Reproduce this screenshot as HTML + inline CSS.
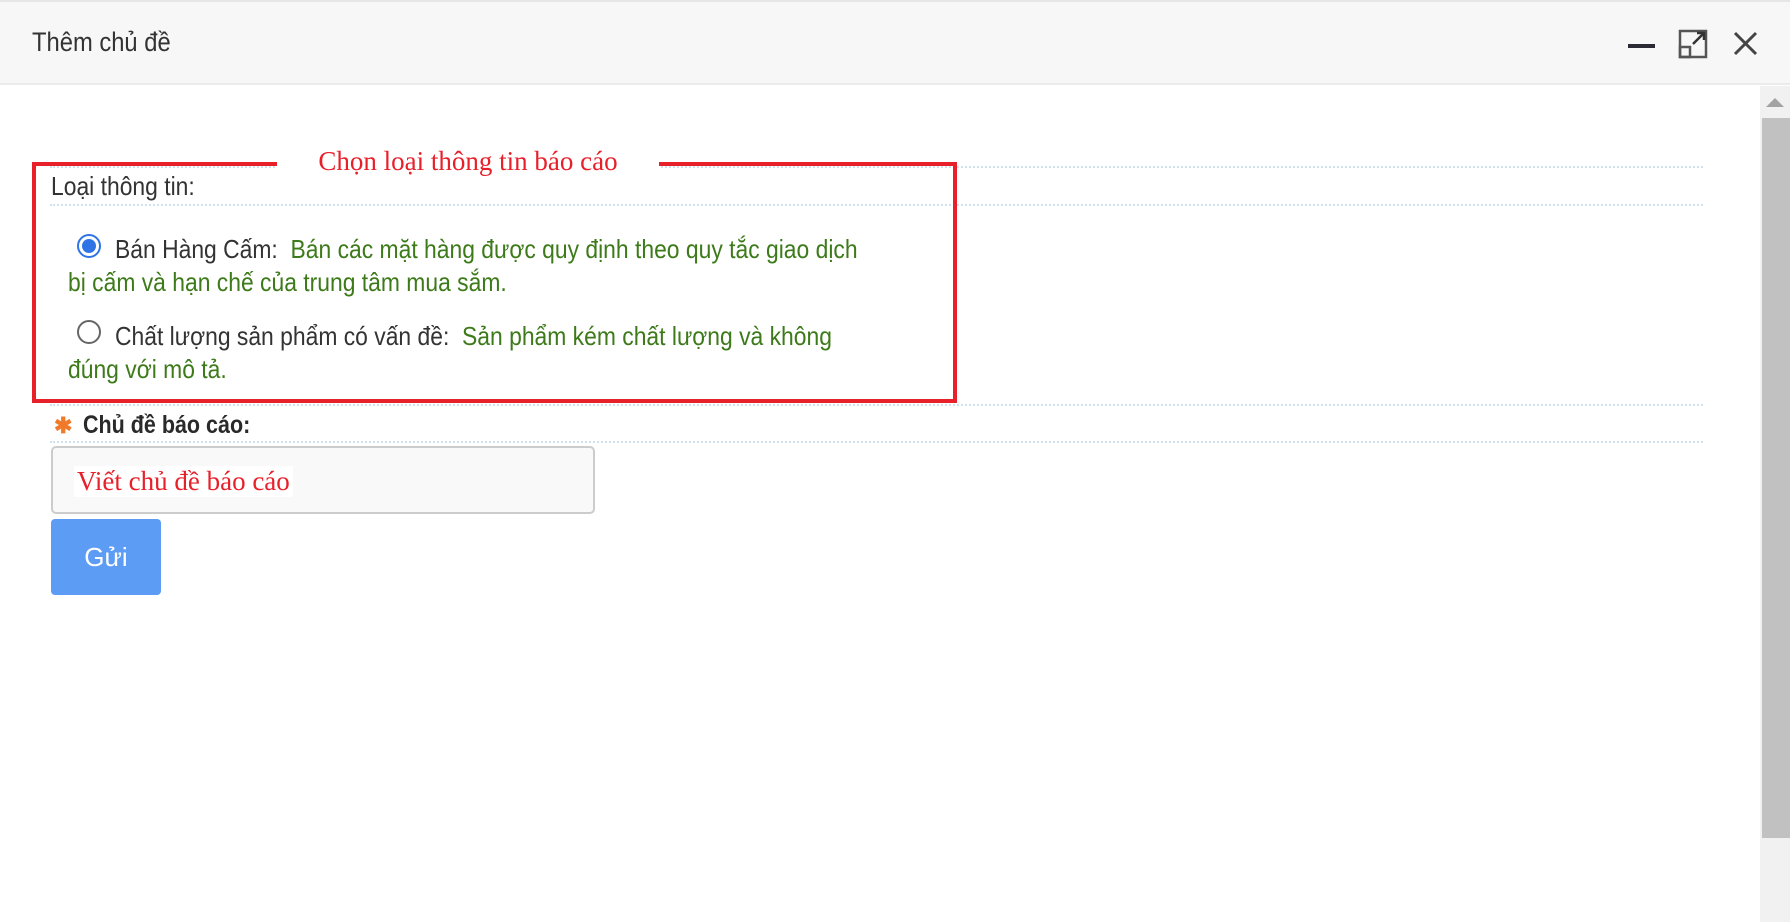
<!DOCTYPE html>
<html><head><meta charset="utf-8"><style>
*{margin:0;padding:0;box-sizing:border-box}
body{width:1790px;height:922px;background:#fff;position:relative;overflow:hidden;font-family:"Liberation Sans","Noto Sans CJK SC",sans-serif;color:#333}
.hdr{position:absolute;left:0;top:0;width:1790px;height:85px;background:#f7f7f7;border-top:2px solid #e6e6e6;border-bottom:2px solid #ebebeb}
.title{position:absolute;left:32px;top:25px;font-size:27px;color:#333;transform:scaleX(0.88);transform-origin:left;white-space:nowrap}
.a{position:absolute;white-space:nowrap}
.dot{position:absolute;left:50px;width:1653px;border-top:2px dotted #cfe3ef}
.red{position:absolute;left:32px;top:162px;width:925px;height:241px;border:4px solid #e8202a}
.gap{position:absolute;left:277px;top:156px;width:382px;height:14px;background:#fff}
.leg{position:absolute;left:277px;top:146px;width:382px;text-align:center;font-family:"Liberation Serif",serif;font-size:27px;color:#e8202a;white-space:nowrap}
.t{font-size:26px;transform:scaleX(0.88);transform-origin:left}
.g{color:#3d7a1a}
.radio{position:absolute;width:24px;height:24px;border-radius:50%;border:2px solid #666;background:#fff}
.radio.on{border-color:#2f74e6}
.radio.on::after{content:"";position:absolute;left:3px;top:3px;width:14px;height:14px;border-radius:50%;background:#2f74e6}
.inp{position:absolute;left:51px;top:446px;width:544px;height:68px;background:#f9f9f9;border:2px solid #ccc;border-radius:5px}
.btn{position:absolute;left:51px;top:519px;width:110px;height:76px;background:#5d9cf5;border-radius:4px;color:#fff;font-size:26px;text-align:center;line-height:76px}
.sb{position:absolute;left:1760px;top:86px;width:30px;height:836px;background:#f1f1f1}
.thumb{position:absolute;left:1762px;top:118px;width:28px;height:720px;background:#c1c1c1}
</style></head><body>
<div class="hdr"><div class="title">Thêm chủ đề</div></div>
<svg class="a" style="left:1620px;top:25px" width="145" height="40" viewBox="0 0 145 40">
<rect x="8" y="19" width="27" height="4" fill="#2b2b35"/>
<rect x="60" y="6" width="26" height="26" fill="none" stroke="#555" stroke-width="2.5"/>
<rect x="60" y="22" width="10" height="10" fill="none" stroke="#555" stroke-width="2.5"/>
<path d="M73 19 L84 8 M77 8 H84 V15" fill="none" stroke="#333" stroke-width="2.5"/>
<path d="M115 8 L136 29 M136 8 L115 29" stroke="#444" stroke-width="3"/>
</svg>
<div class="sb"></div><div class="thumb"></div>
<svg class="a" style="left:1765px;top:96px" width="20" height="12"><path d="M1 11 L10 2 L19 11Z" fill="#a3a3a3"/></svg>

<div class="dot" style="top:166px"></div>
<div class="dot" style="top:204px"></div>
<div class="dot" style="top:404px"></div>
<div class="dot" style="top:441px"></div>

<div class="red"></div>
<div class="gap"></div>
<div class="leg">Chọn loại thông tin báo cáo</div>

<div class="a t" style="left:51px;top:171px">Loại thông tin:</div>
<div class="radio on" style="left:77px;top:234px"></div>
<div class="a t" style="left:115px;top:234px">Bán Hàng Cấm: &nbsp;<span class="g">Bán các mặt hàng được quy định theo quy tắc giao dịch</span></div>
<div class="a t g" style="left:68px;top:267px">bị cấm và hạn chế của trung tâm mua sắm.</div>
<div class="radio" style="left:77px;top:320px"></div>
<div class="a t" style="left:115px;top:321px">Chất lượng sản phẩm có vấn đề: &nbsp;<span class="g">Sản phẩm kém chất lượng và không</span></div>
<div class="a t g" style="left:68px;top:354px">đúng với mô tả.</div>

<div class="a" style="left:54px;top:413px;color:#f07a2a;font-size:22px;font-weight:bold">✱</div>
<div class="a t" style="left:83px;top:411px;font-weight:bold;color:#2a2a2a;font-size:25px;transform:scaleX(0.86)">Chủ đề báo cáo:</div>
<div class="inp"></div>
<div class="a" style="left:74px;top:466px;font-family:'Liberation Serif',serif;font-size:27px;color:#e8202a;background:#fff;padding:0 3px">Viết chủ đề báo cáo</div>
<div class="btn">Gửi</div>
</body></html>
